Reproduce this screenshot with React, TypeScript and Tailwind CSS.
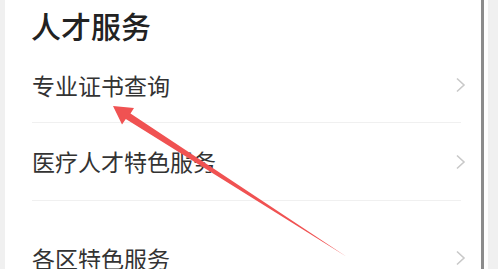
import React from 'react';

const font = { fontFamily: '"Noto Sans CJK SC", "Noto Sans", sans-serif' }

const Chevron = () => (
  <svg width="11" height="16" viewBox="0 0 11 16" fill="none" className="shrink-0">
    <path d="M2 1.5 L9 8 L2 14.5" stroke="#c9c9c9" strokeWidth="1.6" strokeLinejoin="miter" />
  </svg>
)

const rows = [
  { label: '专业证书查询', h: 'h-[74px]', divider: true },
  { label: '医疗人才特色服务', h: 'h-[77px]', divider: true },
  { label: '各区特色服务', h: 'h-[114px]', divider: false },
]

export default function App() {
  return (
    <div className="relative w-[498px] h-[269px] overflow-hidden flex bg-white" style={font}>
      <div className="w-[5px] bg-[#f0f0f0]" />
      <div className="w-[476px] bg-white">
        <div className="h-[48px] pl-[26px] flex items-center">
          <span className="text-[30px] leading-none font-medium text-[#222] pt-[2px]">人才服务</span>
        </div>
        {rows.map(r => (
          <div key={r.label}>
            <div className={`${r.h} pl-[27px] pr-[15px] flex items-center justify-between`}>
              <span className="text-[23px] leading-none text-[#333]">{r.label}</span>
              <Chevron />
            </div>
            {r.divider && <div className="ml-[27px] mr-[20px] h-px bg-[#f0f0f0]" />}
          </div>
        ))}
      </div>
      <div className="w-[3px] bg-[#8c8c8c]" />
      <div className="w-[4px] bg-white" />
      <div className="flex-1 bg-[#f0f0f0]" />

      {/* annotation arrow drawn over the list */}
      <svg className="absolute left-0 top-0 pointer-events-none" width="498" height="269" viewBox="0 0 498 269">
        <polygon
          points="113,106 134,108 130.5,113.5 347,257 125.8,119 122,124.5"
          fill="#f05252"
        />
      </svg>
    </div>
  )
}
